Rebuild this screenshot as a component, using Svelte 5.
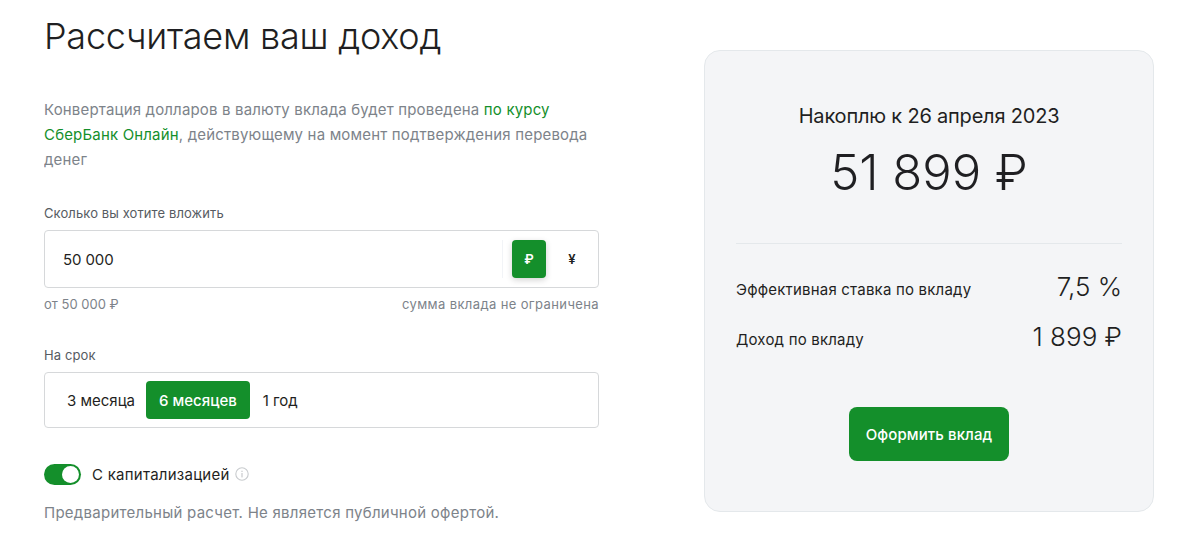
<script>
  let terms = ['3 месяца', '6 месяцев', '1 год'];
  let term = $state('6 месяцев');
  let currency = $state('₽');
  let capitalize = $state(true);
</script>

<main class="page">
  <section class="form">
    <h1>Рассчитаем ваш доход</h1>
    <p class="note">
      Конвертация долларов в валюту вклада будет проведена <a href="#rate">по курсу СберБанк Онлайн</a>, действующему на момент подтверждения перевода денег
    </p>

    <div class="label first">Сколько вы хотите вложить</div>
    <div class="box amount">
      <span class="value">50 000</span>
      <div class="currencies">
        {#each ['₽', '¥'] as c}
          <button class="cur" class:active={currency === c} onclick={() => (currency = c)}>{c}</button>
        {/each}
      </div>
    </div>
    <div class="hints"><span>от 50 000 ₽</span><span class="limit">сумма вклада не ограничена</span></div>

    <div class="label second">На срок</div>
    <div class="box terms">
      {#each terms as t}
        <button class="term" class:active={term === t} onclick={() => (term = t)}>{t}</button>
      {/each}
    </div>

    <div class="capital">
      <button class="switch" class:on={capitalize} aria-label="С капитализацией" onclick={() => (capitalize = !capitalize)}><span class="knob"></span></button>
      <span class="cap-text">С капитализацией</span>
      <svg class="info" width="14" height="14" viewBox="0 0 14 14" fill="none">
        <circle cx="7" cy="7" r="6.2" stroke="#c8cbce" stroke-width="1.1" />
        <rect x="6.4" y="6" width="1.2" height="4.4" fill="#c8cbce" />
        <rect x="6.4" y="3.7" width="1.2" height="1.3" fill="#c8cbce" />
      </svg>
    </div>
    <p class="disclaimer">Предварительный расчет. Не является публичной офертой.</p>
  </section>

  <aside class="card">
    <div class="date">Накоплю к 26 апреля 2023</div>
    <div class="total">51 899 ₽</div>
    <hr />
    <div class="row"><span>Эффективная ставка по вкладу</span><b>7,5 %</b></div>
    <div class="row second-row"><span>Доход по вкладу</span><b>1 899 ₽</b></div>
    <button class="submit">Оформить вклад</button>
  </aside>
</main>

<style>
  :global(body) { margin: 0; background: #fff; font-family: Inter, "Noto Sans", sans-serif; color: #1f1f22; }
  .page { display: flex; justify-content: space-between; width: 1110px; height: 547px; margin-left: 44px; overflow: hidden; }
  .form { width: 555px; }
  h1 { margin: 13px 0 0; font-size: 36px; line-height: 46px; font-weight: 300; letter-spacing: -0.25px; color: #1f1f22; }
  .note { margin: 38px 0 0; font-size: 15px; line-height: 25px; letter-spacing: 0.17px; color: #7d838a; width: 555px; }
  .note a { color: #148f2b; text-decoration: none; }
  .label { font-size: 13px; line-height: 18px; letter-spacing: 0.1px; color: #565b62; }
  .label.first { margin-top: 32px; }
  .label.second { margin-top: 33px; }
  .box { box-sizing: border-box; width: 555px; border: 1px solid #d6d8da; border-radius: 4px; display: flex; align-items: center; }
  .amount { height: 58px; margin-top: 8px; padding: 0 9px 0 18px; justify-content: space-between; }
  .value { font-size: 15px; letter-spacing: -0.1px; color: #1f1f22; }
  .currencies { display: flex; align-items: center; gap: 9px; border-left: 1px solid #f2f4f7; padding-left: 9px; height: 38px; }
  .cur { width: 34px; height: 38px; border: 0; border-radius: 4px; background: transparent; font: 600 13px Inter, "Noto Sans", sans-serif; color: #1f1f22; padding: 0; }
  .cur.active { background: #148f2b; color: #fff; box-shadow: 0 2px 6px rgba(0, 0, 0, .18); }
  .hints { display: flex; justify-content: space-between; margin-top: 7px; font-size: 13px; line-height: 18px; color: #7d838a; }
  .limit { letter-spacing: 0.38px; }
  .terms { height: 56px; margin-top: 8px; padding: 0 8px 0 9px; }
  .term { height: 38px; padding: 0 13px; border: 0; border-radius: 4px; background: transparent; font: 400 15px Inter, "Noto Sans", sans-serif; color: #1f1f22; }
  .term.active { margin-left: -2px; background: #148f2b; color: #fff; font-weight: 500; }
  .capital { display: flex; align-items: center; margin-top: 35px; height: 22px; }
  .switch { position: relative; width: 37px; height: 21px; border: 0; border-radius: 11px; background: #c8cbce; padding: 0; }
  .switch.on { background: #148f2b; }
  .knob { position: absolute; top: 2px; left: 2px; width: 17px; height: 17px; border-radius: 50%; background: #fff; }
  .on .knob { left: 18px; }
  .cap-text { margin-left: 11px; font-size: 15px; letter-spacing: 0.25px; color: #1f1f22; }
  .info { margin-left: 5px; }
  .disclaimer { margin: 17px 0 0; font-size: 15px; line-height: 22px; letter-spacing: 0.26px; color: #7d838a; }
  .card { box-sizing: border-box; width: 450px; height: 462px; margin-top: 50px; padding: 52px 31px 0; background: #f4f5f7; border: 1px solid #e4e8eb; border-radius: 16px; display: flex; flex-direction: column; align-items: stretch; }
  .date { text-align: center; font-size: 20px; line-height: 26px; letter-spacing: -0.2px; color: #1f1f22; }
  .total { text-align: center; margin-top: 13px; font-size: 49px; line-height: 62px; font-weight: 300; color: #1f1f22; }
  hr { width: 100%; margin: 39px 0 0; border: 0; border-top: 1px solid #e4e8eb; }
  .row { display: flex; justify-content: space-between; align-items: center; margin-top: 24px; font-size: 15px; letter-spacing: 0.2px; height: 36px; }
  .row span { padding-top: 6px; }
  .row.second-row { margin-top: 14px; }
  .row b { font-size: 26px; font-weight: 300; letter-spacing: 0; }
  .submit { align-self: center; margin-top: 53px; width: 160px; height: 54px; border: 0; border-radius: 8px; background: #148f2b; color: #fff; font: 500 15px Inter, "Noto Sans", sans-serif; letter-spacing: 0.1px; }
</style>
